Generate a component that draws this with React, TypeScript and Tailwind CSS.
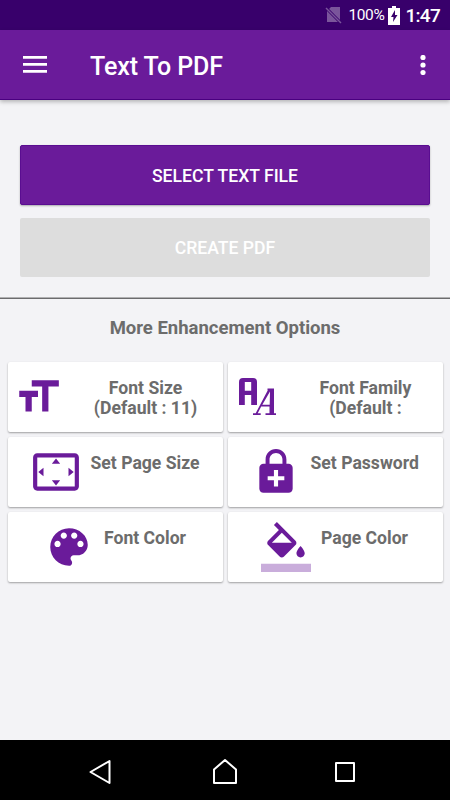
import type { ReactNode } from 'react';

const iconClass = 'h-[50px] w-[50px] shrink-0 fill-[#6a1b9a]';

const FontSizeIcon = () => (
  <svg viewBox="0 0 24 24" className={iconClass}>
    <path d="M9 4v3h5v12h3V7h5V4H9zm-6 8h3v7h3v-7h3V9H3v3z" />
  </svg>
);

const FontFamilyIcon = () => (
  <svg viewBox="0 0 50 50" className={iconClass}>
    <path
      fillRule="evenodd"
      d="M7 33V10q0-4 4-4H21q4 0 4 4V33H19.200V23H12.800V33zM12.800 10V18.800H19.200V10z"
    />
    <path
      fillRule="evenodd"
      d="M35.500 16.500H42V41.300H44V43H33.500V41.300H37.500V34.500H29.200L25.700 41.300H28.700V43H21V41.300H23.700L35.800 18.300H35.500zM38 19.500L30.300 32.800H37.700z"
    />
  </svg>
);

const PageSizeIcon = () => (
  <svg viewBox="0 0 24 24" className={iconClass}>
    <path d="M12.010 5.500L10 8h4l-1.990-2.500zM18 10v4l2.500-1.990L18 10zM6 10l-2.500 2.010L6 14v-4zm8 6h-4l2.010 2.500L14 16zm7-13H3c-1.100 0-2 .9-2 2v14c0 1.100.9 2 2 2h18c1.100 0 2-.9 2-2V5c0-1.100-.9-2-2-2zm0 16.010H3V4.990h18v14.020z" />
  </svg>
);

const PasswordIcon = () => (
  <svg viewBox="0 0 24 24" className={iconClass}>
    <path d="M18 8h-1V6c0-2.760-2.240-5-5-5S7 3.240 7 6v2H6c-1.100 0-2 .9-2 2v10c0 1.100.9 2 2 2h12c1.100 0 2-.9 2-2V10c0-1.100-.9-2-2-2zM8.900 6c0-1.710 1.390-3.100 3.100-3.100s3.100 1.390 3.100 3.100v2H8.900V6zM16 16h-3v3h-2v-3H8v-2h3v-3h2v3h3v2z" />
  </svg>
);

const PaletteIcon = () => (
  <svg viewBox="0 0 24 24" className={iconClass}>
    <path d="M12 3c-4.970 0-9 4.030-9 9s4.030 9 9 9c.83 0 1.500-.67 1.500-1.500 0-.39-.15-.74-.39-1.010-.23-.26-.38-.61-.38-.99 0-.83.67-1.500 1.500-1.500H16c2.760 0 5-2.240 5-5 0-4.420-4.030-8-9-8zm-5.500 9c-.83 0-1.500-.67-1.500-1.500S5.670 9 6.500 9 8 9.670 8 10.500 7.330 12 6.500 12zm3-4C8.670 8 8 7.330 8 6.500S8.670 5 9.500 5s1.500.67 1.500 1.500S10.330 8 9.500 8zm5 0c-.83 0-1.500-.67-1.500-1.500S13.670 5 14.500 5s1.500.67 1.500 1.500S15.330 8 14.500 8zm3 4c-.83 0-1.500-.67-1.500-1.500S16.670 9 17.500 9s1.500.67 1.500 1.500-.67 1.500-1.500 1.500z" />
  </svg>
);

const FillIcon = () => (
  <svg viewBox="0 0 24 24" className={iconClass}>
    <path d="M16.560 8.940L7.620 0 6.210 1.410l2.380 2.380-5.150 5.150c-.59.59-.59 1.540 0 2.120l5.500 5.500c.29.29.68.44 1.060.44s.77-.15 1.060-.44l5.500-5.500c.59-.58.59-1.530 0-2.120zM5.210 10L10 5.210 14.790 10H5.210zM19 11.500s-2 2.170-2 3.500c0 1.100.9 2 2 2s2-.9 2-2c0-1.330-2-3.500-2-3.500z" />
    <path fillOpacity=".36" d="M0 20h24v4H0z" />
  </svg>
);

type Option = { label: ReactNode; icon: ReactNode; pad: string; text: string };

const options: Option[] = [
  { label: <>Font Size<br />(Default : 11)</>, icon: <FontSizeIcon />, pad: 'pl-[5px]', text: 'w-[165px] pl-[6px]' },
  { label: <>Font Family<br />(Default :</>, icon: <FontFamilyIcon />, pad: 'pl-[4px]', text: 'w-[165px] pl-[7px]' },
  { label: 'Set Page Size', icon: <PageSizeIcon />, pad: 'pl-[23px]', text: 'ml-2.5' },
  { label: 'Set Password', icon: <PasswordIcon />, pad: 'pl-[23px]', text: 'ml-2.5' },
  { label: 'Font Color', icon: <PaletteIcon />, pad: 'pl-[36.500px]', text: 'ml-2.5' },
  { label: 'Page Color', icon: <FillIcon />, pad: 'pl-[33.500px]', text: 'ml-2.5' },
];

const StatusBar = () => (
  <div className="flex h-[30px] items-center justify-end bg-[#38006b] pr-[10px] text-white">
    <svg viewBox="0 0 18 18" className="mr-[6px] h-[18px] w-[18px]">
      <path d="M6 1h9v15H2V5z" fill="#7a559b" />
      <path d="M0 1L16 17" stroke="#38006b" strokeWidth="3" />
      <path d="M1 2L16 17" stroke="#7a559b" strokeWidth="1.400" />
    </svg>
    <span className="mr-[4px] pt-[2px] text-[15.500px] tracking-[-0.4px]">100%</span>
    <svg viewBox="0 0 12 19" className="mr-[5px] h-[19px] w-3">
      <path d="M4 0h4v2h4v17H0V2h4z" fill="#fff" />
      <path d="M7 4L3 11h2.500L5 16l4.500-7H7z" fill="#38006b" />
    </svg>
    <span className="pt-[2px] text-[19px] font-medium tracking-[-0.7px]">1:47</span>
  </div>
);

const AppBar = () => (
  <header className="relative flex h-[70px] items-center border-b border-[#4a0080] bg-[#6a1b9a] pr-[24.500px] pl-[23px] text-white shadow-[0_2px_4px_rgba(0,0,0,0.25)]">
    <svg viewBox="0 0 24 18" className="h-[18px] w-6">
      <path d="M0 0h24v2.700H0zM0 7h24v2.700H0zM0 14h24v2.700H0z" fill="#fff" />
    </svg>
    <h1 className="ml-[43px] flex-1 pt-[5px] text-[25px] font-medium tracking-[-0.1px]">Text To PDF</h1>
    <svg viewBox="0 0 6 20" className="h-5 w-1.5" fill="#fff">
      <circle cx="3" cy="2.500" r="2.600" />
      <circle cx="3" cy="10" r="2.600" />
      <circle cx="3" cy="17.500" r="2.600" />
    </svg>
  </header>
);

const NavBar = () => (
  <nav className="flex h-[60px] items-center gap-[95px] bg-black pl-[85px]">
    <svg viewBox="0 0 30 30" className="h-[30px] w-[30px] fill-none stroke-white stroke-2">
      <path d="M24.500 6v22L5.500 17z" strokeLinejoin="round" />
    </svg>
    <svg viewBox="0 0 30 30" className="h-[30px] w-[30px] fill-none stroke-white stroke-2">
      <path d="M4 14.500L15 5l11 9.500V28H4z" strokeLinejoin="round" />
    </svg>
    <svg viewBox="0 0 30 30" className="-ml-[5px] h-[30px] w-[30px] fill-none stroke-white stroke-2">
      <path d="M6 8h18v18H6z" strokeLinejoin="round" />
    </svg>
  </nav>
);

const App = () => {
  return (
    <div className="flex h-[800px] w-[450px] flex-col overflow-hidden bg-[#f3f3f6] font-[Roboto,sans-serif]">
      <StatusBar />
      <AppBar />
      <main className="flex-1">
        <div className="flex flex-col gap-[13px] px-5 pt-[45px] pb-5 text-[17.600px] font-medium text-white">
          <button className="h-[60px] rounded-[2px] border border-[#5a0d91] bg-[#6a1b9a] pt-[2px] shadow-[0_1px_2px_rgba(0,0,0,0.3)]">
            SELECT TEXT FILE
          </button>
          <button className="h-[59px] rounded-[2px] bg-[#dddddd] pt-[2px]" disabled>
            CREATE PDF
          </button>
        </div>
        <div className="h-0.5 border-t border-b border-t-[#b0b0b2] border-b-[#6b6b6d]" />
        <h2 className="pt-[15px] text-center text-[18.500px] leading-7 font-bold text-[#6c6c6c]">More Enhancement Options</h2>
        <div className="grid grid-cols-2 gap-[5px] px-[7.500px] pt-5">
          {options.map((option, i) => (
            <div
              key={i}
              className={`flex h-[70px] items-start rounded-[2px] bg-white pt-[10px] text-[17.600px] leading-5 font-bold text-[#6c6c6c] shadow-[0_1px_2px_rgba(0,0,0,0.35)] ${option.pad}`}
            >
              {option.icon}
              <div className={`pt-[6px] text-center whitespace-nowrap ${option.text}`}>{option.label}</div>
            </div>
          ))}
        </div>
      </main>
      <NavBar />
    </div>
  );
};

export default App;
